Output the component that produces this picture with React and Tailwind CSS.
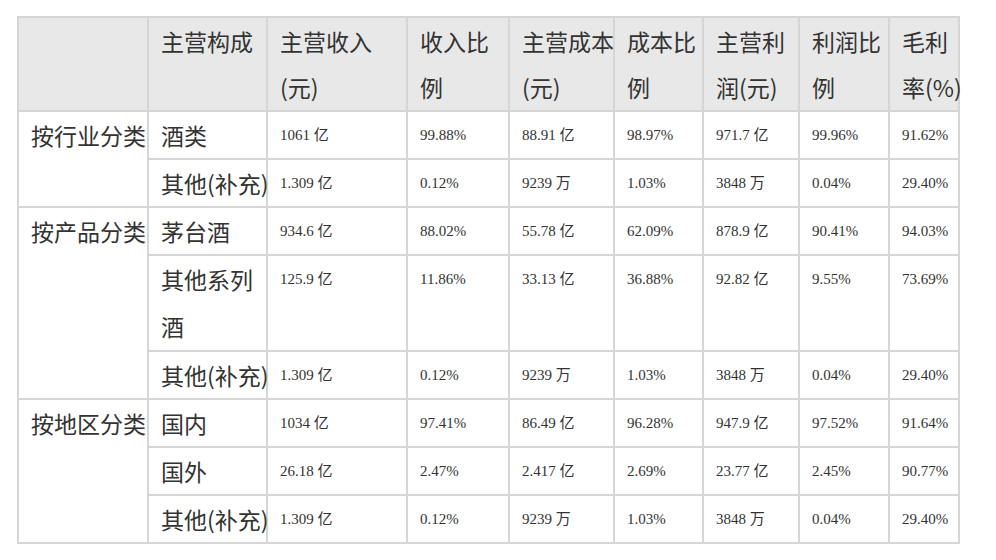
import React from "react";

const colClasses = [
  "w-[130px]",
  "w-[119px]",
  "w-[140px]",
  "w-[102px]",
  "w-[105px]",
  "w-[89px]",
  "w-[96px]",
  "w-[90px]",
  "w-[70px]",
];

const groups = [
  {
    name: "按行业分类",
    rows: [
      { label: ["酒类"], v: ["1061 亿", "99.88%", "88.91 亿", "98.97%", "971.7 亿", "99.96%", "91.62%"] },
      { label: ["其他(补充)"], v: ["1.309 亿", "0.12%", "9239 万", "1.03%", "3848 万", "0.04%", "29.40%"] },
    ],
  },
  {
    name: "按产品分类",
    rows: [
      { label: ["茅台酒"], v: ["934.6 亿", "88.02%", "55.78 亿", "62.09%", "878.9 亿", "90.41%", "94.03%"] },
      { label: ["其他系列", "酒"], v: ["125.9 亿", "11.86%", "33.13 亿", "36.88%", "92.82 亿", "9.55%", "73.69%"] },
      { label: ["其他(补充)"], v: ["1.309 亿", "0.12%", "9239 万", "1.03%", "3848 万", "0.04%", "29.40%"] },
    ],
  },
  {
    name: "按地区分类",
    rows: [
      { label: ["国内"], v: ["1034 亿", "97.41%", "86.49 亿", "96.28%", "947.9 亿", "97.52%", "91.64%"] },
      { label: ["国外"], v: ["26.18 亿", "2.47%", "2.417 亿", "2.69%", "23.77 亿", "2.45%", "90.77%"] },
      { label: ["其他(补充)"], v: ["1.309 亿", "0.12%", "9239 万", "1.03%", "3848 万", "0.04%", "29.40%"] },
    ],
  },
];

const headers = [
  [""],
  ["主营构成"],
  ["主营收入", "(元)"],
  ["收入比", "例"],
  ["主营成本", "(元)"],
  ["成本比", "例"],
  ["主营利", "润(元)"],
  ["利润比", "例"],
  ["毛利", "率(%)"],
];

function Lines({ lines }) {
  return lines.map((l, i) => (
    <React.Fragment key={i}>
      {i > 0 && <br />}
      {l}
    </React.Fragment>
  ));
}

const cjkCell =
  "border-2 border-[#d6d6d6] align-top text-left font-normal font-['Noto_Sans_CJK_SC',sans-serif] text-[23px] p-0 pl-[12px] whitespace-nowrap";
const numCell =
  "border-2 border-[#d6d6d6] align-top text-left font-['Liberation_Serif','Noto_Sans_CJK_SC',serif] text-[15px] leading-[46px] p-0 pl-[12px] whitespace-nowrap";

export default function App() {
  return (
    <div className="w-[996px] h-[560px] bg-white pt-[16px] pl-[17px] text-[#333]">
      <table className="border-collapse table-fixed w-[943px]">
        <colgroup>
          {colClasses.map((c, i) => (
            <col key={i} className={c} />
          ))}
        </colgroup>
        <thead>
          <tr>
            {headers.map((h, i) => (
              <th key={i} className={cjkCell + " bg-[#e8e8e8] leading-[46px]"}>
                <Lines lines={h} />
              </th>
            ))}
          </tr>
        </thead>
        <tbody>
          {groups.map((g) =>
            g.rows.map((r, ri) => (
              <tr key={g.name + ri}>
                {ri === 0 && (
                  <td rowSpan={g.rows.length} className={cjkCell + " leading-[46px]"}>
                    {g.name}
                  </td>
                )}
                <td className={cjkCell + (r.label.length > 1 ? " leading-[47px]" : " leading-[46px]")}>
                  <Lines lines={r.label} />
                </td>
                {r.v.map((v, vi) => (
                  <td key={vi} className={numCell}>
                    {v}
                  </td>
                ))}
              </tr>
            ))
          )}
        </tbody>
      </table>
    </div>
  );
}
